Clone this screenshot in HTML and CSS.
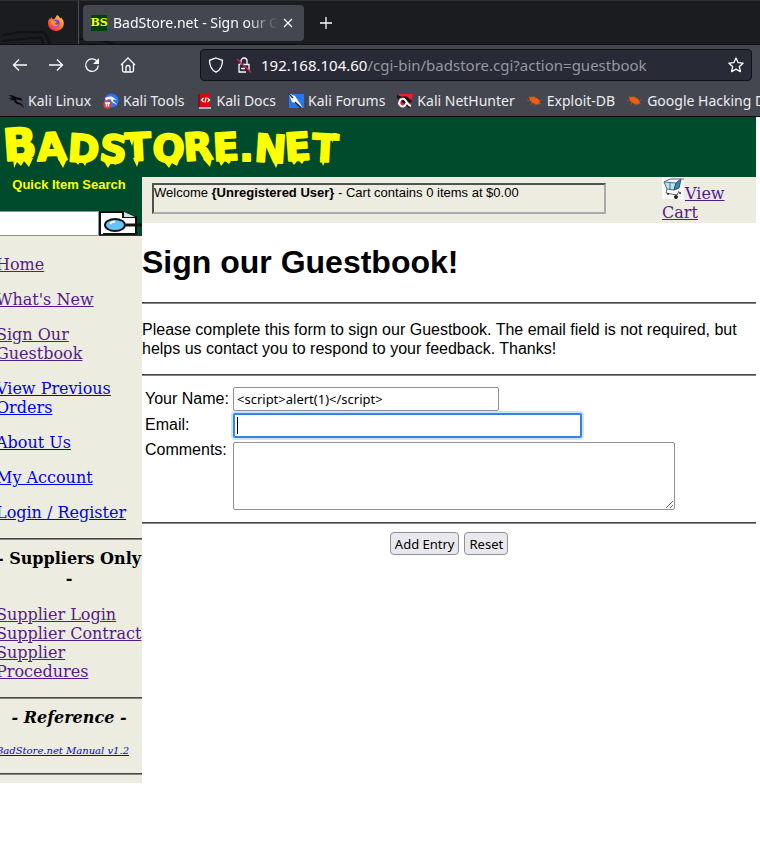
FILE: index.html
```html
<!DOCTYPE html>
<html lang="en">
<head>
<meta charset="utf-8">
<title>BadStore.net - Sign our Guestbook</title>
<link rel="stylesheet" href="styles.css">
</head>
<body>
<header class="browser">
  <div class="tabs">
    <svg class="kali-art" viewBox="0 0 140 45" aria-hidden="true"><path d="M0 35L18 32H44L50 45M0 41l40-4 3 8M78 39q20-2 38 6" fill="none" stroke="#101115" stroke-width="2"/></svg>
    <div class="pinned">
      <svg width="16" height="16" viewBox="0 0 16 16" aria-label="Firefox">
        <defs><linearGradient id="fx" x1="1" y1="0" x2="0.2" y2="1"><stop offset="0" stop-color="#ffe43b"/><stop offset=".45" stop-color="#ff8a20"/><stop offset="1" stop-color="#f9225c"/></linearGradient></defs>
        <path d="M9 0c2 1 2.600 2.500 3.100 3.300C13 3.300 13 2.500 13 2.500c2 2 3 4 2.800 6.500C15.500 13 12 16 8 16 3.500 16 0 12.500 0 8.300 0 6 .9 4.300 1.600 3.200L2 4.600 3.700 2l.6 2L6 4.200C7.500 3 8 1.500 9 0z" fill="url(#fx)"/>
        <circle cx="8" cy="8.500" r="3.700" fill="#7542e5"/>
        <path d="M3 6c1.500-1 3.500-.5 4.300.2L9 7 7 8.200c0 1.800 2.500 2 4 .8-1 3-5 3.500-7 .8C3.200 8.800 3 7 3 6z" fill="#ff9a22"/>
      </svg>
    </div>
    <div class="tab">
      <span class="favicon">BS</span>
      <span class="tab-title">BadStore.net - Sign our Guestbook</span>
      <button class="icon-btn" aria-label="Close tab"><svg width="10" height="10" viewBox="0 0 10 10"><path d="M1 1l8 8M9 1L1 9"/></svg></button>
    </div>
    <button class="icon-btn new-tab" aria-label="New tab"><svg width="12" height="12" viewBox="0 0 12 12"><path d="M6 0v12M0 6h12"/></svg></button>
  </div>
  <div class="toolbar">
    <button class="icon-btn" aria-label="Back"><svg width="16" height="16" viewBox="0 0 16 16"><path d="M15 8H1.500M7 2.500L1.500 8 7 13.500"/></svg></button>
    <button class="icon-btn" aria-label="Forward"><svg width="16" height="16" viewBox="0 0 16 16"><path d="M1 8h13.500M9 2.500L14.500 8 9 13.500"/></svg></button>
    <button class="icon-btn" aria-label="Reload"><svg width="16" height="16" viewBox="0 0 16 16"><path d="M13.500 5A6.300 6.300 0 1 0 14.300 8.500"/><path d="M15 1v6H9z" fill="#fbfbfe" stroke="none"/></svg></button>
    <button class="icon-btn" aria-label="Home"><svg width="16" height="16" viewBox="0 0 16 16"><path d="M1 8l7-7 7 7M2.500 7v6.500q0 1.500 1.500 1.500h8q1.500 0 1.500-1.500V7M6 15v-4.500a2 2 0 0 1 4 0V15"/></svg></button>
    <div class="url">
      <svg width="16" height="16" viewBox="0 0 16 16"><path d="M8 1l6.500 2.300C14.500 9 12.500 13 8 15.200 3.500 13 1.500 9 1.500 3.300z"/></svg>
      <svg width="16" height="16" viewBox="0 0 16 16"><path d="M5 7.500V4a3 3 0 0 1 6 0v3.500M7 7.500h6V13M10 15H3V7.500h1M5 11.500h4"/><path d="M1 2l14 13.500" stroke="#e8194a"/></svg>
      <span class="address"><b>192.168.104.60</b>/cgi-bin/badstore.cgi?action=guestbook</span>
      <button class="icon-btn" aria-label="Bookmark this page"><svg width="16" height="16" viewBox="0 0 16 16"><path d="M8 1l2.100 4.600 5 .6-3.700 3.400 1 5L8 12.100l-4.400 2.500 1-5L.9 6.200l5-.6z" stroke-linejoin="round"/></svg></button>
    </div>
  </div>
  <nav class="bookmarks" aria-label="Bookmarks">
    <a href="#"><svg width="16" height="16" viewBox="0 0 16 16"><path d="M0 2l5 .5 4 2 4 .5 2 3-3-1-4-.5c0 2 2 3 4 3.500s3 2 4 5.500c-2-3-3-3.600-5-4S6 10 6 7L1 7.500 5 5.500 0 6l4-2z" fill="#08090b"/></svg>Kali Linux</a>
    <a href="#"><svg width="16" height="16" viewBox="0 0 16 16"><circle cx="8.500" cy="7.500" r="7" fill="#2777f5"/><path d="M2 5c4-2 7-2 9 0l3 2-4-.5c0 3 3 2 4 6-2-3-6-2-6-6C6 6 4 6 3 8z" fill="#f3f6ff"/><circle cx="4.500" cy="11.500" r="4.200" fill="#ee3a3d"/><path d="M2 10h5M3.500 10v3.500M5.500 10v3.500" stroke="#fff"/></svg>Kali Tools</a>
    <a href="#"><svg width="16" height="16" viewBox="0 0 16 16"><path d="M1 1h3v13H1z" fill="#7b1321"/><path d="M3 0h10v14H3z" fill="#d9070b"/><path d="M2 14h12v2H2z" fill="#a9b3ca"/><path d="M6.500 5L4.500 7l2 2M10.500 5l2 2-2 2M9 4.500L8 9.500" fill="none" stroke="#fff"/></svg>Kali Docs</a>
    <a href="#"><svg width="16" height="16" viewBox="0 0 16 16"><path d="M1 1h15v14H1z" fill="#2376f4"/><path d="M0 0l7 3 4 6 4 6-5-4-6-2-2-5z" fill="#fff"/><path d="M0 0l5 5M7 9l6 6" stroke="#18202e"/></svg>Kali Forums</a>
    <a href="#"><svg width="16" height="16" viewBox="0 0 16 16"><path d="M2 1h14l-3 12H2z" fill="#f31d31"/><path d="M0 2l6 2-6 2z" fill="#15161b"/><path d="M13 14L6 8q-1-4 3-3l5 4" fill="none" stroke="#15161b" stroke-width="3"/><path d="M14 13c-4-1-4-5-7-7-4-1-6 4-4 6 2 3 6 1 6-2" fill="none" stroke="#fff" stroke-width="2"/></svg>Kali NetHunter</a>
    <a href="#"><svg width="16" height="16" viewBox="0 0 16 16"><use href="#bug"/></svg>Exploit-DB</a>
    <a href="#"><svg width="16" height="16" viewBox="0 0 16 16"><g id="bug"><path d="M2 4.500c3-1.500 7-.5 9.500 2 2 2 1.500 5-.5 5-4 0-8-2.500-9-7z" fill="#f0600f"/><path d="M1.500 3l3 2M0 7.500l5 .500M7 3l2 3M11 8l4-1M10 10l4 1M5 9l-1 3M8 10v3" fill="none" stroke="#b5551f" stroke-width=".7"/></g></svg>Google Hacking DB</a>
  </nav>
</header>

<div class="site">
  <header class="banner">
    <svg width="344" height="60" viewBox="0 0 344 60" role="img" aria-label="BadStore.net">
      <text class="logo" x="4" y="44" rotate="-4 -3 4 6 -3 3 -4 -3 0 4 -4 3"><tspan class="logo-big">B</tspan>ADSTORE.NET</text>
      <path class="drips" d="M13 40l1 11 3-6 4 4 3-5 5 6 4-9zM58 42l5 9 4-9zM74 42l4 6 3-5 4 6 4-8zM103 43l5 8 3-5 5 2 3-7zM133 41l4 9 3-10zM161 41l8 10 3-5 5 3 3-8zM203 42l7 8 2-9zM218 42l3 7 4-5 4 3 4-6zM271 40l5 11 5-12zM290 42l4 6 4-5 4 4 4-6zM320 40l3 9 4-9zM128 18l4 11 3-11zM315 16l2 8 3-8zM333 16l-1 10 5-10z"/>
    </svg>
  </header>

  <aside class="sidebar">
    <form class="search">
      <label for="q">Quick Item Search</label>
      <div class="search-row">
        <input id="q" type="text">
        <button aria-label="Search"><svg width="43" height="25" viewBox="0 0 43 25"><path d="M1 1h23l13 6v16H1z" fill="#fff"/><path d="M1 0v24M1 1h23v5h13v17H4" fill="none" stroke="#101010" stroke-width="2"/><path d="M25 1l11 5H25z" fill="#ddd"/><ellipse cx="16" cy="14" rx="10" ry="6" fill="#63c4fb" stroke="#111" stroke-width="2"/><path d="M27 14h16" stroke="#111" stroke-width="3"/><path d="M11 13q2-3 5-2" fill="none" stroke="#fff" stroke-width="2"/></svg></button>
      </div>
    </form>
    <nav class="menu" aria-label="Store">
      <p><a class="seen" href="#">Home</a></p>
      <p><a class="seen" href="#">What's New</a></p>
      <p><a class="seen" href="#">Sign Our Guestbook</a></p>
      <p><a href="#">View Previous Orders</a></p>
      <p><a href="#">About Us</a></p>
      <p><a href="#">My Account</a></p>
      <p><a href="#">Login / Register</a></p>
      <hr>
      <h2>- Suppliers Only -</h2>
      <p><a class="seen" href="#">Supplier Login</a><br><a class="seen" href="#">Supplier Contract</a><br><a class="seen" href="#">Supplier Procedures</a></p>
      <hr>
      <h2><i>- Reference -</i></h2>
      <p class="manual"><a href="#">BadStore.net Manual v1.2</a></p>
      <hr>
    </nav>
  </aside>

  <main>
    <div class="status">
      <p class="welcome">Welcome <b>{Unregistered User}</b> - Cart contains 0 items at $0.00</p>
      <p class="cart"><a class="seen" href="#"><svg width="23" height="22" viewBox="0 0 23 22" aria-hidden="true"><path d="M0 0h22v22H0z" fill="#fafafa"/><path d="M2 5l12 1-2 7-7-1z" fill="#b9e4f6" stroke="#47738c"/><path d="M14 6l5-4-2 9-5 2z" fill="#3586b4" stroke="#285573"/><path d="M2 5l6-3 11 0-5 4M8 6v6M5 12l-1 4 11 2 2-4M19 2h3" fill="none" stroke="#536779"/><circle cx="6" cy="17" r="1" fill="#222"/><circle cx="14" cy="20" r="2" fill="#222"/><circle cx="18" cy="16" r="1" fill="#222"/></svg>View Cart</a></p>
    </div>
    <h1>Sign our Guestbook!</h1>
    <hr>
    <p class="intro">Please complete this form to sign our Guestbook. The email field is not required, but helps us contact you to respond to your feedback. Thanks!</p>
    <hr>
    <form>
      <div class="fields">
        <label for="name">Your Name:</label>
        <input id="name" class="name" type="text" value="&lt;script&gt;alert(1)&lt;/script&gt;">
        <label for="email">Email:</label>
        <input id="email" class="email" type="text">
        <label for="comments">Comments:</label>
        <textarea id="comments"></textarea>
      </div>
      <hr>
      <div class="actions">
        <button type="submit">Add Entry</button>
        <button type="reset">Reset</button>
      </div>
    </form>
  </main>
</div>
</body>
</html>
```

FILE: styles.css
```css
* { box-sizing: border-box; }
body { margin: 0; background: #fff; color: #000; font: 16px/19px "DejaVu Serif", serif; }
a { color: #0000ee; }
a.seen { color: #551a8b; }
p, h1, h2 { margin: 0; }
hr { margin: 0; border: 0; border-top: 1px solid #484848; border-bottom: 1px solid #858585; height: 2px; }

/* Browser chrome */
.browser { background: #44474f; color: #fbfbfe; font: 14px/20px "Noto Sans", sans-serif; border-bottom: 1px solid #0c0c0d; }
.browser svg { fill: none; stroke: #fbfbfe; stroke-width: 1.3; flex: none; }
.browser .bookmarks svg { stroke: none; }
.icon-btn { display: flex; padding: 0; border: 0; background: none; }
.tabs { position: relative; display: flex; align-items: center; height: 45px; background: #1b1c20; border-top: 1px solid #2c2e32; border-bottom: 1px solid #0e0f12; }
.kali-art { position: absolute; left: 0; top: 0; width: 140px; height: 44px; }
.pinned { position: relative; align-self: stretch; display: flex; align-items: center; width: 79px; padding-left: 48px; border-right: 1px solid #505157; }
.browser .pinned svg { stroke: none; }
.tab { position: relative; display: flex; align-items: center; width: 221px; height: 36px; margin-left: 4px; padding: 0 11px 0 8px; border-radius: 4px; background: #44474f; }
.favicon { width: 16px; height: 16px; background: #00410c; color: #ff0; font: bold 11px/16px "DejaVu Serif", serif; display: flex; justify-content: center; }
.tab-title { flex: 1; margin: 0 5px 0 6px; overflow: hidden; white-space: nowrap; mask-image: linear-gradient(to left, transparent, #000 32px); }
.new-tab { margin-left: 16px; }
.toolbar { display: flex; align-items: center; gap: 20px; padding: 4px 8px 4px 12px; }
.url { flex: 1; display: flex; align-items: center; gap: 12px; height: 32px; margin-left: 44px; padding: 0 7px; border: 1px solid #101117; border-radius: 4px; background: #282a36; }
.address { flex: 1; margin-left: -3px; font-size: 15px; color: #97989f; white-space: nowrap; overflow: hidden; }
.address b { font-weight: 400; color: #fbfbfe; }
.bookmarks { display: flex; gap: 12px; height: 31px; padding: 0 8px; align-items: center; overflow: hidden; }
.bookmarks a { display: flex; align-items: center; gap: 4px; flex: none; color: #ececef; text-decoration: none; white-space: nowrap; }

/* Store frames */
.site { display: grid; grid-template-columns: 142px 1fr; align-items: start; margin-right: 4px; }
.banner { grid-column: 1 / -1; height: 60px; background: #004b2c; }
.banner svg { display: block; }
.logo { font: bold 38px "DejaVu Sans", sans-serif; fill: #ff0; stroke: #ff0; stroke-width: 2; stroke-linejoin: round; }
.logo-big { font-size: 44px; }
.drips { fill: #ff0; }

.sidebar { overflow: hidden; background: #ecece0; }
.search { background: #004b2c; color: #ff0; }
.search label { display: block; margin-left: -4px; height: 34px; font: bold 13px/16px "Liberation Sans", sans-serif; text-align: center; }
.search-row { display: flex; height: 25px; }
.search input { width: 99px; border: 1px solid #8f8f9d; border-left: 0; background: #fff; }
.search button { display: flex; padding: 0; border: 0; background: none; }
.menu { margin-left: -4px; padding: 19px 0 8px; }
.menu p { margin-bottom: 16px; }
.menu h2 { margin: 9px 0 16px; font-size: 16px; line-height: 20px; text-align: center; }
.menu .manual { font-size: 10px; line-height: 13px; font-style: italic; }

main { font-family: "Liberation Sans", sans-serif; }
.status { display: flex; height: 46px; padding: 0 16px 0 10px; background: #ecece0; }
.welcome { flex: 1; max-width: 454px; height: 31px; margin: 6px 56px 0 0; border: 2px solid; border-color: #505050 #aaa #aaa #505050; font-size: 13px; line-height: 16px; white-space: nowrap; }
.cart { width: 78px; font-family: "DejaVu Serif", serif; }
.cart svg { vertical-align: baseline; }
h1 { margin: 21px 0; font-size: 32px; line-height: 37px; }
.intro { margin: 16px 0; }
.fields { display: grid; grid-template-columns: 85px 1fr; gap: 2px 3px; padding: 11px 3px 12px; }
.fields label { line-height: 24px; }
.fields label:last-of-type { line-height: 20px; }
.fields input, .fields textarea, .actions button { font: 13px/18px "Noto Sans", sans-serif; border: 1px solid #8f8f9d; border-radius: 2px; background: #fff; color: #000; }
.fields input { height: 24px; padding: 0 3px; max-width: 100%; }
.fields .name { width: 266px; }
.fields .email { width: 349px; height: 25px; border: 2px solid #3584e4; box-shadow: 0 0 0 2px #cde4fb; background: #fff linear-gradient(#000, #000) 2px 50% / 1px 17px no-repeat; }
.fields textarea { width: 442px; max-width: 100%; height: 68px; margin-top: 2px; }
.actions { display: flex; justify-content: center; gap: 5px; padding-top: 8px; }
.actions button { height: 23px; padding: 0 4px; border-radius: 4px; background: #e9e9ed; }
```
